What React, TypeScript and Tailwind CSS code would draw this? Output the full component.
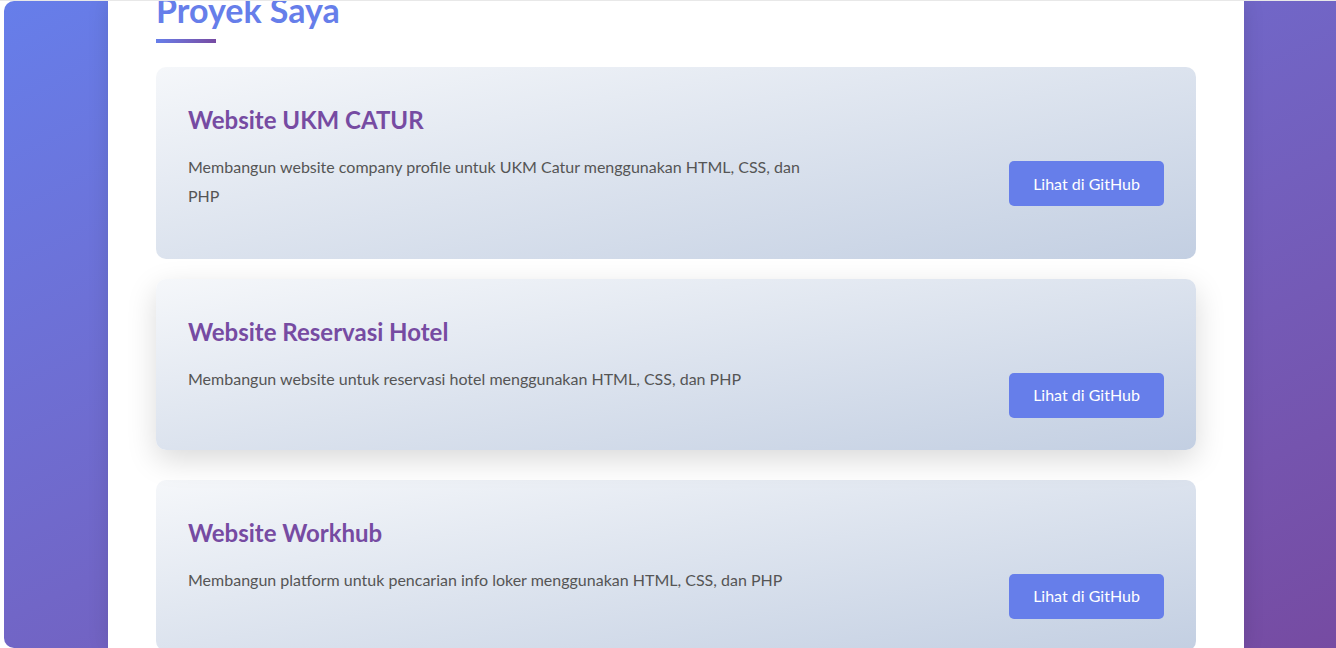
const projects = [
  {
    title: "Website UKM CATUR",
    description: "Membangun website company profile untuk UKM Catur menggunakan HTML, CSS, dan PHP",
    hover: false,
  },
  {
    title: "Website Reservasi Hotel",
    description: "Membangun website untuk reservasi hotel menggunakan HTML, CSS, dan PHP",
    hover: true,
  },
  {
    title: "Website Workhub",
    description: "Membangun platform untuk pencarian info loker menggunakan HTML, CSS, dan PHP",
    hover: false,
  },
];

function ProjectCard({ title, description, hover }: { title: string; description: string; hover: boolean }) {
  return (
    <div
      className={
        hover
          ? "rounded-[10px] bg-gradient-to-br from-[#f5f7fa] to-[#c3cfe2] p-8 -translate-y-[5px] shadow-[0_10px_30px_rgba(0,0,0,0.15)]"
          : "rounded-[10px] bg-gradient-to-br from-[#f5f7fa] to-[#c3cfe2] p-8"
      }
    >
      <h3 className="pt-[6px] text-[24px] leading-[29px] font-bold text-[#764ba2] mb-[19px]">{title}</h3>
      <div className="flex items-start justify-between">
        <p className="w-[630px] text-base leading-[28.8px] text-[#555] mb-4">{description}</p>
        <a
          href="#"
          className="mt-2 flex h-[45px] w-[155px] shrink-0 items-center justify-center rounded-[5px] bg-[#667eea] text-base text-white"
        >
          Lihat di GitHub
        </a>
      </div>
    </div>
  );
}

export default function App() {
  return (
    <div
      className="h-[648px] overflow-hidden border-t border-[#e8e8e8] bg-white pl-[4px]"
      style={{ fontFamily: 'Lato, "Noto Sans", sans-serif' }}
    >
      <div className="h-full overflow-hidden rounded-l-[10px] bg-gradient-to-br from-[#667eea] to-[#764ba2]">
        <div className="ml-[104px] flow-root h-full w-[1136px] bg-white px-12 shadow-[0_0_20px_rgba(0,0,0,0.12)]">
          <h2 className="-mt-[10px] text-[34px] leading-[38px] font-bold text-[#667eea]">Proyek Saya</h2>
          <div className="mt-[10px] h-[4px] w-[60px] bg-gradient-to-r from-[#667eea] to-[#764ba2]" />
          <div className="mt-[24px] flex flex-col gap-[25px]">
            {projects.map((p) => (
              <ProjectCard key={p.title} {...p} />
            ))}
          </div>
        </div>
      </div>
    </div>
  );
}
